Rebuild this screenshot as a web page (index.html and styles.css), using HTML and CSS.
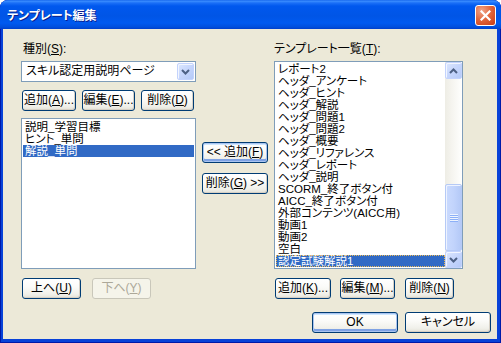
FILE: index.html
```html
<!DOCTYPE html>
<html lang="ja">
<head>
<meta charset="utf-8">
<title>テンプレート編集</title>
<link rel="stylesheet" href="styles.css">
</head>
<body>
<div class="window">
  <div class="titlebar">
    <span class="title">テンプレート編集</span>
    <button class="close" aria-label="閉じる">
      <svg width="11" height="11" viewBox="0 0 11 11"><path d="M1.5 1.5 L9.5 9.5 M9.5 1.5 L1.5 9.5" stroke="#fff" stroke-width="2.2" stroke-linecap="square" fill="none"/></svg>
    </button>
  </div>
  <div class="client">
    <div class="columns">
      <div class="col col-left">
        <div class="label">種別(<u>S</u>):</div>
        <div class="combo">
          <span class="combo-text">スキル認定用説明ページ</span>
          <span class="sbtn combo-btn"><svg width="9" height="6" viewBox="0 0 9 6"><polyline points="1,1 4.5,4.5 8,1" fill="none" stroke="#4D6185" stroke-width="2"/></svg></span>
        </div>
        <div class="btnrow row-a">
          <button class="btn w54">追加(<u>A</u>)...</button>
          <button class="btn w53">編集(<u>E</u>)...</button>
          <button class="btn w53">削除(<u>D</u>)</button>
        </div>
        <div class="listbox list-left">
          <div class="items">
            <div class="item">説明_学習目標</div>
            <div class="item">ヒント_単問</div>
            <div class="item sel">解説_単問</div>
          </div>
        </div>
        <div class="btnrow row-b">
          <button class="btn w59">上へ(<u>U</u>)</button>
          <button class="btn w59 disabled">下へ(<u>Y</u>)</button>
        </div>
      </div>
      <div class="col col-mid">
        <button class="btn w66 default">&lt;&lt; 追加(<u>F</u>)</button>
        <button class="btn w66">削除(<u>G</u>) &gt;&gt;</button>
      </div>
      <div class="col col-right">
        <div class="label">テンプレート一覧(<u>T</u>):</div>
        <div class="listbox list-right">
          <div class="items">
            <div class="item">レポート2</div>
            <div class="item">ヘッダ_アンケート</div>
            <div class="item">ヘッダ_ヒント</div>
            <div class="item">ヘッダ_解説</div>
            <div class="item">ヘッダ_問題1</div>
            <div class="item">ヘッダ_問題2</div>
            <div class="item">ヘッダ_概要</div>
            <div class="item">ヘッダ_リファレンス</div>
            <div class="item">ヘッダ_レポート</div>
            <div class="item">ヘッダ_説明</div>
            <div class="item">SCORM_終了ボタン付</div>
            <div class="item">AICC_終了ボタン付</div>
            <div class="item">外部コンテンツ(AICC用)</div>
            <div class="item">動画1</div>
            <div class="item">動画2</div>
            <div class="item">空白</div>
            <div class="item sel focus">認定試験解説1</div>
          </div>
          <div class="vscroll">
            <span class="sbtn"><svg width="9" height="6" viewBox="0 0 9 6"><polyline points="1,5 4.5,1.5 8,5" fill="none" stroke="#4D6185" stroke-width="2"/></svg></span>
            <div class="track">
              <div class="thumb">
                <svg width="8" height="8" viewBox="0 0 8 8">
                  <rect x="0" y="0" width="8" height="1" fill="#EEF4FE"/>
                  <rect x="0" y="1" width="8" height="1" fill="#8CB0F8"/>
                  <rect x="0" y="2" width="8" height="1" fill="#EEF4FE"/>
                  <rect x="0" y="3" width="8" height="1" fill="#8CB0F8"/>
                  <rect x="0" y="4" width="8" height="1" fill="#EEF4FE"/>
                  <rect x="0" y="5" width="8" height="1" fill="#8CB0F8"/>
                  <rect x="0" y="6" width="8" height="1" fill="#EEF4FE"/>
                  <rect x="0" y="7" width="8" height="1" fill="#8CB0F8"/>
                </svg>
              </div>
            </div>
            <span class="sbtn"><svg width="9" height="6" viewBox="0 0 9 6"><polyline points="1,1 4.5,4.5 8,1" fill="none" stroke="#4D6185" stroke-width="2"/></svg></span>
          </div>
        </div>
        <div class="btnrow row-c">
          <button class="btn w56">追加(<u>K</u>)...</button>
          <button class="btn w55">編集(<u>M</u>)...</button>
          <button class="btn w49">削除(<u>N</u>)</button>
        </div>
      </div>
    </div>
    <div class="footer">
      <button class="btn w86 default">OK</button>
      <button class="btn w86">キャンセル</button>
    </div>
  </div>
</div>
</body>
</html>
```

FILE: styles.css
```css
* { box-sizing: border-box; }
html, body { margin: 0; padding: 0; }
body {
  width: 501px;
  height: 343px;
  overflow: hidden;
  background: #ffffff;
  font-family: "Liberation Sans", "Noto Sans CJK JP", sans-serif;
  font-size: 12px;
  font-feature-settings: "palt";
  color: #000000;
}
u { text-decoration: underline; text-underline-offset: 1px; }

.window {
  width: 501px;
  height: 343px;
  display: flex;
  flex-direction: column;
  background: #0842D8;
  border-radius: 8px 8px 0 0;
  overflow: hidden;
  box-shadow: inset 1px 0 0 #0019A8, inset -1px 0 0 #0019A8, inset 0 -1px 0 #0019A8;
}

.titlebar {
  height: 29px;
  flex: none;
  display: flex;
  align-items: center;
  justify-content: space-between;
  padding: 0 5px 0 7px;
  background: linear-gradient(180deg, #0A5BE8 0px, #3D8FFF 1px, #1A6FF7 3px, #0058EE 6px, #0055E6 16px, #005AF0 23px, #004FDD 27px, #003FCB 29px);
}
.title {
  color: #ffffff;
  font-weight: bold;
  font-size: 12px;
  line-height: 14px;
  text-shadow: 1px 1px 0 #0A1E8C;
  padding-top: 2px;
}
.close {
  width: 21px;
  height: 21px;
  margin-top: 2px;
  padding: 0;
  border: 1px solid #ffffff;
  border-radius: 3px;
  background: radial-gradient(circle at 30% 25%, #F0A58A 0%, #E2683F 45%, #D24A22 80%, #C23A17 100%);
  display: flex;
  align-items: center;
  justify-content: center;
}

.client {
  flex: 1;
  margin: 0 4px 4px 3px;
  background: #ECE9D8;
  padding: 14px 6px 0 17px;
  display: flex;
  flex-direction: column;
}

.columns { display: flex; }
.col { display: flex; flex-direction: column; }
.col-left { width: 176px; margin-right: 6px; }
.col-left > .combo, .col-left > .listbox { margin-left: 1px; }
.col-mid { width: 66px; margin-right: 6px; padding-top: 99px; gap: 10px; }
.col-right { width: 189px; }

.label {
  height: 13px;
  line-height: 13px;
  white-space: nowrap;
}
.col-left > .label { padding-left: 3px; }

.combo {
  margin-top: 5px;
  height: 21px;
  border: 1px solid #7F9DB9;
  background: #ffffff;
  padding: 1px;
  display: flex;
  align-items: center;
  justify-content: space-between;
}
.combo-text { padding-left: 3px; line-height: 17px; white-space: nowrap; }
.combo-btn { width: 16px; height: 17px; }

.sbtn {
  width: 17px;
  height: 17px;
  flex: none;
  display: flex;
  align-items: center;
  justify-content: center;
  border: 1px solid #C3D3FD;
  border-radius: 2px;
  background: linear-gradient(135deg, #DCE7FE 0%, #C6D6FC 50%, #B5CAF8 100%);
  box-shadow: inset 1px 1px 0 #F2F6FF;
}

.btnrow { display: flex; }
.row-a { margin-top: 8px; margin-left: 2px; gap: 6px; }
.row-b { margin-top: 9px; margin-left: 2px; gap: 11px; }
.row-c { margin-top: 9px; margin-left: 1px; gap: 9px; }
.row-c .w49 { margin-left: 1px; }

.btn {
  height: 21px;
  padding: 0;
  border: 1px solid #003C74;
  border-radius: 3px;
  background: linear-gradient(180deg, #FFFFFF 0%, #FBFBF9 40%, #F0F0EA 80%, #E3E1D6 100%);
  box-shadow: inset -1px -1px 0 #D6D0C5;
  font-family: "Liberation Sans", "Noto Sans CJK JP", sans-serif;
  font-size: 12px;
  font-feature-settings: "palt";
  line-height: 19px;
  color: #000000;
  display: flex;
  align-items: center;
  justify-content: center;
  white-space: nowrap;
}
.btn.default {
  box-shadow: inset 0 0 0 1px #A9C4F0, inset 0 -2px 0 1px #7FA2E4, inset 0 1px 0 1px #CEE7FF;
}
.btn.disabled {
  border-color: #C9C7BA;
  color: #ACA899;
  background: #F5F4EA;
  box-shadow: none;
}
.w49 { width: 49px; }
.w53 { width: 53px; }
.w54 { width: 54px; }
.w55 { width: 55px; }
.w56 { width: 56px; }
.w59 { width: 59px; }
.w66 { width: 66px; }
.w86 { width: 86px; }

.listbox {
  border: 1px solid #7F9DB9;
  background: #ffffff;
  display: flex;
}
.list-left { margin-top: 7px; height: 151px; }
.list-right { margin-top: 5px; height: 208px; }
.items { flex: 1; padding: 2px 1px 0 1px; min-width: 0; }
.list-right .items { padding: 1px 0 0 1px; }
.item {
  height: 12px;
  font-size: 11.5px;
  line-height: 12px;
  padding-left: 2px;
  white-space: nowrap;
}
.item.sel { background: #316AC5; color: #ffffff; }
.item.focus { outline: 1px dotted #EDBB55; outline-offset: -1px; }

.vscroll {
  width: 17px;
  flex: none;
  display: flex;
  flex-direction: column;
  background: linear-gradient(90deg, #EEEDE5 0%, #F5F4EF 40%, #FCFCFA 85%, #FFFFFF 100%);
}
.track {
  flex: 1;
  display: flex;
  flex-direction: column;
  justify-content: flex-end;
}
.thumb {
  height: 67px;
  border: 1px solid #B6CAF6;
  border-radius: 2px;
  background: linear-gradient(90deg, #CADAFE 0%, #C2D4FC 50%, #B4C9F7 100%);
  box-shadow: inset 1px 1px 0 #EEF3FF;
  display: flex;
  align-items: center;
  justify-content: center;
}

.footer {
  margin-top: 13px;
  display: flex;
  justify-content: flex-end;
  gap: 7px;
}
```
